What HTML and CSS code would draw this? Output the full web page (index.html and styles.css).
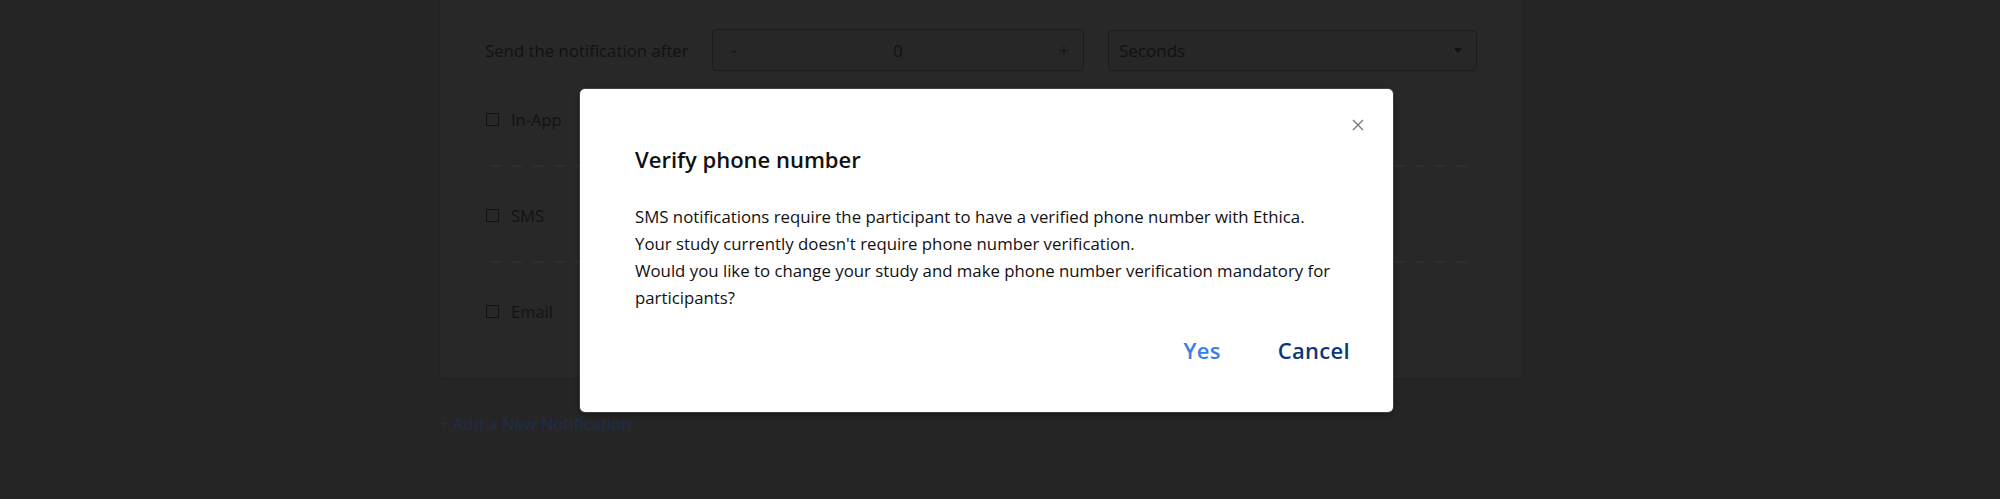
FILE: index.html
```html
<!DOCTYPE html>
<html lang="en">
<head>
<meta charset="utf-8">
<title>Verify phone number</title>
<link rel="stylesheet" href="styles.css">
</head>
<body>
<div class="page">
  <section class="card">
    <div class="delay-row">
      <span class="delay-label">Send the notification after</span>
      <div class="stepper">
        <span class="step">-</span>
        <span class="step-value">0</span>
        <span class="step">+</span>
      </div>
      <div class="select">
        <span>Seconds</span>
        <span class="caret"></span>
      </div>
    </div>
    <div class="channel"><span class="checkbox"></span><span>In-App</span></div>
    <div class="dash"></div>
    <div class="channel"><span class="checkbox"></span><span>SMS</span></div>
    <div class="dash"></div>
    <div class="channel"><span class="checkbox"></span><span>Email</span></div>
  </section>
  <a class="add-link">+ Add a New Notification</a>
</div>

<div class="modal" role="dialog">
  <button class="close" aria-label="Close">
    <svg width="12" height="12" viewBox="0 0 12 12"><path d="M1 1 L11 11 M11 1 L1 11" stroke="#777" stroke-width="1.3" fill="none"/></svg>
  </button>
  <h2 class="modal-title">Verify phone number</h2>
  <p class="modal-body">SMS notifications require the participant to have a verified phone number with Ethica.<br>Your study currently doesn't require phone number verification.<br>Would you like to change your study and make phone number verification mandatory for participants?</p>
  <div class="modal-actions">
    <button class="btn btn-yes">Yes</button>
    <button class="btn btn-cancel">Cancel</button>
  </div>
</div>
</body>
</html>
```
FILE: styles.css
```css
html, body {
  margin: 0;
  padding: 0;
  height: 100%;
  overflow: hidden;
}
body {
  background: #252525;
  font-family: "Open Sans", "Liberation Sans", sans-serif;
  color: #121212;
  position: relative;
}
.page {
  margin-left: 439px;
  width: 1085px;
}
.card {
  margin-top: -20px;
  background: #282828;
  border: 1px solid #1e232b;
  border-radius: 4px;
  padding: 48px 46px 55px 45px;
  box-sizing: border-box;
}
.delay-row {
  display: grid;
  grid-template-columns: 203px 372px 369px;
  column-gap: 24px;
  align-items: center;
  height: 42px;
}
.delay-label {
  font-size: 16.8px;
  color: #121212;
  white-space: nowrap;
}
.stepper, .select {
  height: 42px;
  box-sizing: border-box;
  border: 1px solid #1c1c1c;
  border-radius: 4px;
  background: #272727;
  display: flex;
  align-items: center;
  font-size: 17px;
}
.stepper {
  justify-content: space-between;
  padding: 0 14px 0 18px;
}
.step {
  color: #161616;
  font-size: 18px;
}
.step-value {
  color: #111;
}
.select {
  height: 41px;
  justify-content: space-between;
  padding: 0 14px 0 10px;
  color: #111;
}
.caret {
  width: 0;
  height: 0;
  border-left: 4px solid transparent;
  border-right: 4px solid transparent;
  border-top: 5px solid #111;
}
.channel {
  display: flex;
  align-items: center;
  gap: 12px;
  height: 24px;
  font-size: 16.5px;
  color: #131313;
  margin-left: 1px;
}
.delay-row + .channel {
  margin-top: 36px;
}
.checkbox {
  width: 11px;
  height: 11px;
  border: 1.5px solid #121212;
  border-radius: 1px;
}
.dash {
  height: 2px;
  margin: 34px 0 36px 6px;
  background: repeating-linear-gradient(90deg, #2f2f2f 0 10px, transparent 10px 21px);
}
.add-link {
  display: block;
  margin-top: 33px;
  font-size: 16.5px;
  color: #1d2d4f;
  letter-spacing: 0.1px;
}
.modal {
  position: absolute;
  left: 580px;
  top: 89px;
  width: 813px;
  height: 323px;
  box-sizing: border-box;
  background: #fff;
  border-radius: 5px;
  box-shadow: 0 0 0 1px rgba(120,120,120,0.35), 0 2px 6px rgba(0,0,0,0.4);
  padding: 48px 45px 0 55px;
}
.close {
  position: absolute;
  top: 30px;
  right: 29px;
  width: 12px;
  height: 12px;
  padding: 0;
  border: 0;
  background: none;
  display: flex;
}
.modal-title {
  margin: 0;
  font-size: 22px;
  font-weight: 600;
  color: #111;
  line-height: 44px;
}
.modal-body {
  margin: 22px 0 0 0;
  font-size: 16.8px;
  line-height: 27px;
  color: #111;
}
.modal-actions {
  display: flex;
  justify-content: flex-end;
  gap: 57px;
  margin-top: 24px;
  margin-right: -2px;
}
.btn {
  border: 0;
  background: none;
  padding: 0;
  font-family: "Open Sans", "Liberation Sans", sans-serif;
  font-size: 22px;
  font-weight: 600;
  line-height: 30px;
  letter-spacing: 0.3px;
  cursor: pointer;
}
.btn-yes { color: #3b7fe4; }
.btn-cancel { color: #0c387a; }
```
